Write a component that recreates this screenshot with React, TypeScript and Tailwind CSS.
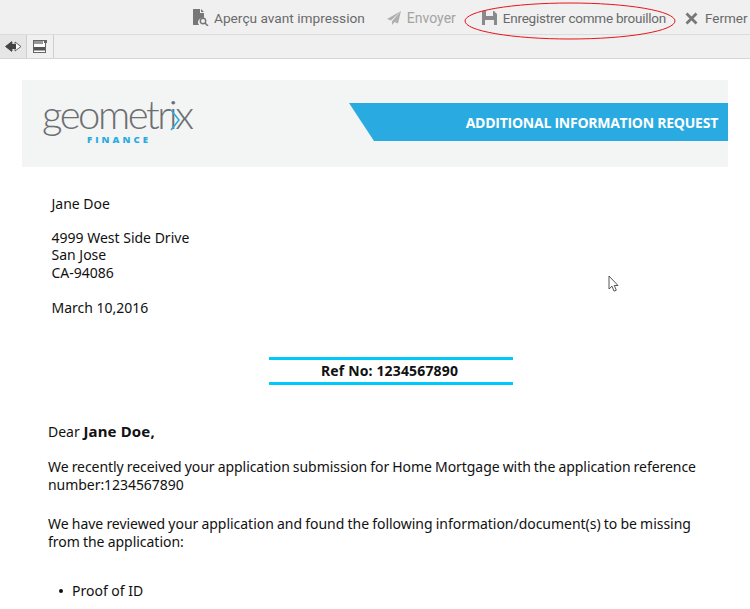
import type { ReactNode } from 'react'

function ToolbarButton({ icon, label, muted, className }: { icon: ReactNode; label: string; muted?: boolean; className?: string }) {
  return (
    <div className={`flex items-center whitespace-nowrap ${muted ? 'text-[#a3a3a3]' : 'text-[#6a6a6a]'} ${className ?? ''}`}>
      {icon}
      <span>{label}</span>
    </div>
  )
}

function PreviewIcon() {
  return (
    <svg width="17" height="17" viewBox="0 0 17 17" className="mr-[5px]">
      <path d="M1 0h7v4h4v5a4.500 4.500 0 0 0-5 7H1z" fill="#777" />
      <path d="M9 0l3 3H9z" fill="#777" />
      <circle cx="11" cy="12" r="2.700" fill="none" stroke="#777" strokeWidth="1.400" />
      <path d="M13 14l3 3" stroke="#777" strokeWidth="1.600" />
    </svg>
  )
}

function SendIcon() {
  return (
    <svg width="15" height="14" viewBox="0 0 15 14" className="mr-[5px]">
      <path d="M14 0L0 8l4 1.500zM14 0L5 10.200V14l2.500-3 3.500 1.500z" fill="#b0b0b0" />
    </svg>
  )
}

function DisketteIcon() {
  return (
    <svg width="15" height="14" viewBox="0 0 15 14" className="mr-[6px]">
      <path fillRule="evenodd" d="M0 0h12l3 3v11H0zM4 0v5h7V0zM3 9v5h9V9z" fill="#8a8a8a" />
    </svg>
  )
}

function CloseIcon() {
  return (
    <svg width="13" height="13" viewBox="0 0 13 13" className="mr-[7px]">
      <path d="M1.500 1.500l10 10M11.500 1.500l-10 10" stroke="#777" strokeWidth="2.800" />
    </svg>
  )
}

function ToggleIcon() {
  return (
    <svg width="17" height="11" viewBox="0 0 17 11">
      <path d="M1 5.500L7 1v2.500h3V1l6 4.500-6 4.500V7.500H7V10z" fill="#fff" stroke="#444" strokeWidth="0.800" />
      <path d="M0 5.500L7 0v3h4v5H7v3z" fill="#444" />
    </svg>
  )
}

function FormIcon() {
  return (
    <svg width="14" height="13" viewBox="0 0 14 13">
      <rect x="0.500" y="0.500" width="12" height="12" fill="#fff" stroke="#666" />
      <rect x="1" y="1" width="9" height="3" fill="#999" />
      <rect x="1" y="7" width="11" height="3.500" fill="#555" />
      <rect x="11" y="0" width="3" height="3" fill="#666" />
    </svg>
  )
}

// logo is a drawing, so the wordmark sits in an svg with real <text>
function Logo() {
  return (
    <svg width="156" height="50" viewBox="0 0 156 50" className="overflow-visible">
      <text x="0" y="31" textLength="152" lengthAdjust="spacing" fill="#6d6e70" className="font-['Lato',sans-serif] font-light text-[40px]">geometrix</text>
      <path d="M129 12L137 22 129 32" fill="none" stroke="#29abe2" strokeWidth="1.600" />
      <text x="45" y="45" textLength="61" lengthAdjust="spacing" fill="#29abe2" className="font-['Open_Sans',sans-serif] font-extrabold text-[9.500px]">FINANCE</text>
    </svg>
  )
}

export default function App() {
  return (
    <div className="w-[750px] h-[609px] overflow-hidden bg-white font-['Noto_Sans',sans-serif] text-[14px] text-[#111]">
      <div className="h-[35px] bg-[#f0f0f0] border-b border-[#dcdcdc] flex items-center pt-[2px] pl-[192px] font-['Roboto',sans-serif]">
        <ToolbarButton icon={<PreviewIcon />} label="Aperçu avant impression" className="text-[13.700px]" />
        <div className="ml-[22px]"><ToolbarButton icon={<SendIcon />} label="Envoyer" muted className="text-[14px]" /></div>
        <div className="relative ml-[26px]">
          <ToolbarButton icon={<DisketteIcon />} label="Enregistrer comme brouillon" className="text-[13.500px] tracking-[-0.240px]" />
          <svg className="absolute left-[-19px] top-[-7px]" width="214" height="40" viewBox="0 0 214 40">
            <ellipse cx="107" cy="20" rx="105" ry="18" fill="none" stroke="#e8141c" strokeWidth="1" />
          </svg>
        </div>
        <div className="ml-[19px]"><ToolbarButton icon={<CloseIcon />} label="Fermer" className="text-[13.500px]" /></div>
      </div>

      <div className="h-[24px] bg-[#f0f0f0] border-b border-[#d6d6d6] flex">
        <div className="w-[27px] bg-[#e6e6e6] border-r border-[#cfcfcf] flex items-center justify-center"><ToggleIcon /></div>
        <div className="w-[27px] border-r border-[#cfcfcf] flex items-center justify-center"><FormIcon /></div>
      </div>

      <div className="relative pt-[21px] pl-[22px]">
        <div className="w-[706px] h-[87px] bg-[#f3f4f4] flex">
          <div className="w-[170px] pl-[20px] pt-[18px]"><Logo /></div>
          <div className="ml-[157px] mt-[23px] w-[379px] h-[38px] bg-[#29abe2] [clip-path:polygon(0_0,100%_0,100%_100%,25px_100%)] flex items-center justify-end pr-[10px] font-['Open_Sans',sans-serif] font-bold text-[14px] tracking-[-0.250px] text-white whitespace-nowrap">
            ADDITIONAL INFORMATION REQUEST
          </div>
        </div>

        <div className="pl-[29.500px] pt-[28px] leading-[17.500px]">
          <p>Jane Doe</p>
          <p className="mt-[16px]">4999 West Side Drive</p>
          <p>San Jose</p>
          <p>CA-94086</p>
          <p className="mt-[18px]">March 10,2016</p>
        </div>

        <div className="mt-[40px] ml-[246.500px] w-[244px] h-[28px] border-y-[3px] border-[#00c8fb] flex items-center justify-center pr-[2px] font-bold leading-none tracking-[0.150px]">
          Ref No: 1234567890
        </div>

        <div className="pl-[26px] pr-[30px] pt-[37px] leading-[18px]">
          <p>Dear <b className="text-[15px] tracking-[0.150px]">Jane Doe,</b></p>
          <p className="mt-[17px] tracking-[-0.050px] [word-spacing:-0.500px]">We recently received your application submission for Home Mortgage with the application reference number:1234567890</p>
          <p className="mt-[21px] tracking-[-0.030px] [word-spacing:-0.400px]">We have reviewed your application and found the following information/document(s) to be missing from the application:</p>
          <ul className="mt-[31px]">
            <li className="flex items-center">
              <span className="ml-[11px] mr-[9px] size-[4px] rounded-full bg-[#111]" />
              Proof of ID
            </li>
          </ul>
        </div>

        <svg className="absolute left-[608px] top-[216px]" width="13" height="18" viewBox="0 0 13 18">
          <path d="M1 1v13l3-2.800 2 5 2.300-1-2-4.700H10z" fill="#fff" stroke="#444" strokeWidth="0.900" />
        </svg>
      </div>
    </div>
  )
}
